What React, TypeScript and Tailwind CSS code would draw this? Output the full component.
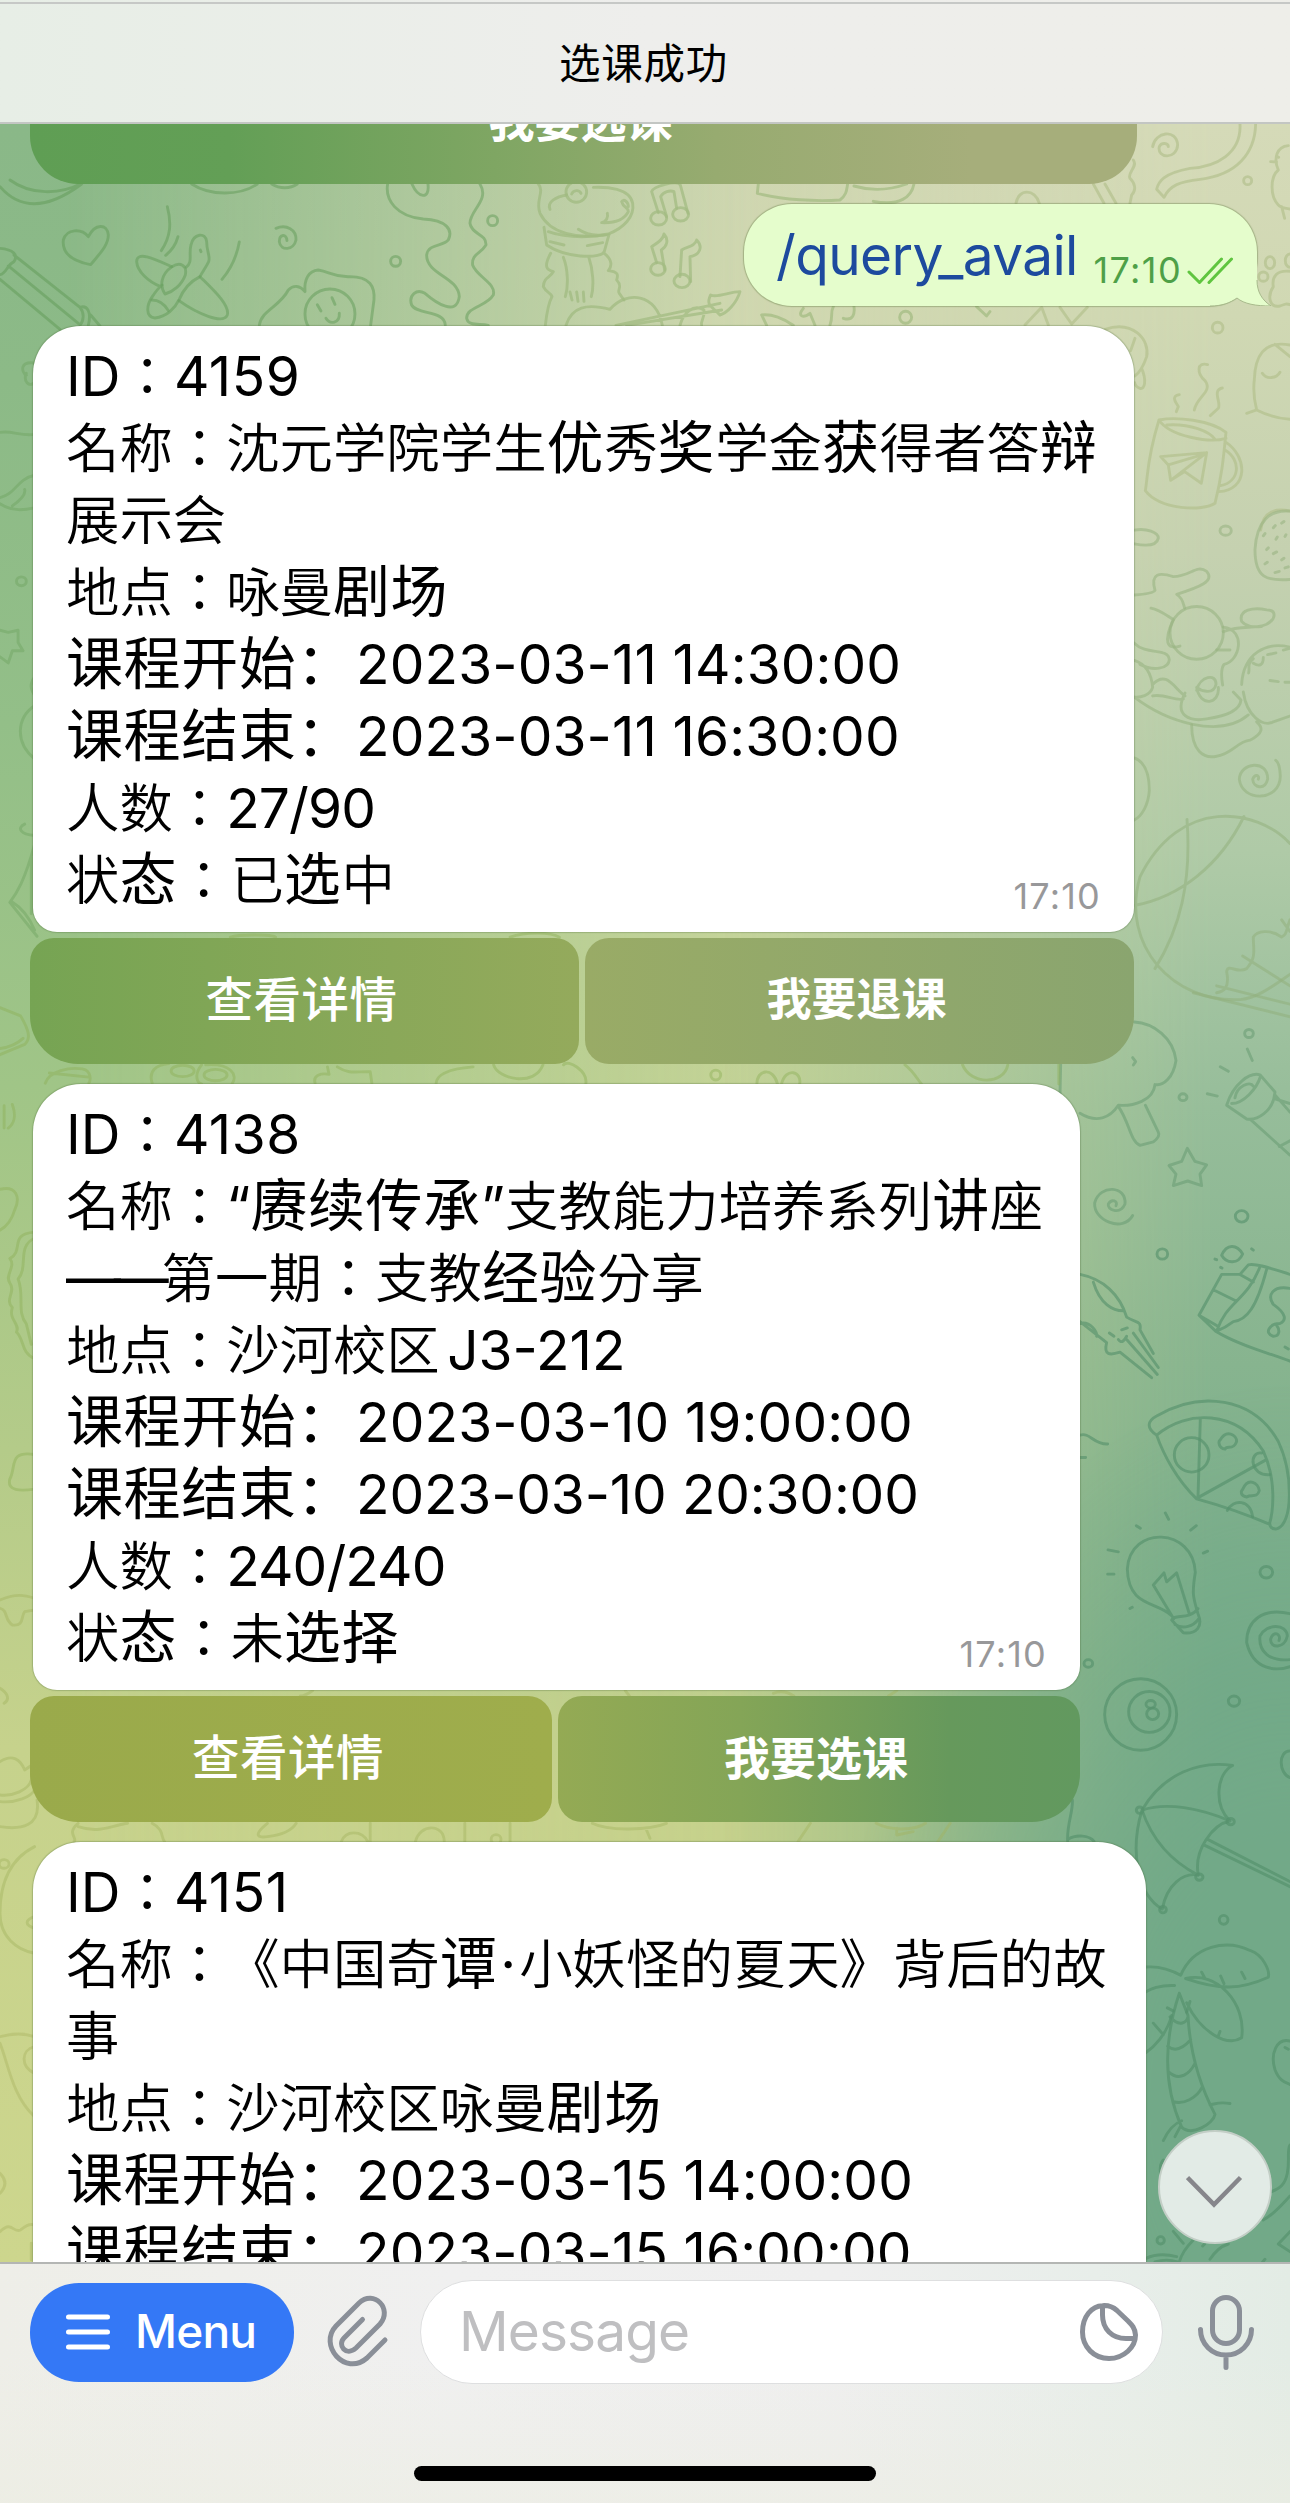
import React from "react";

type Kind = "light" | "heavy" | "latin";
type Seg = { t: string; k: Kind; c?: string };

const L = (t: string, c?: string): Seg => ({ t, k: "light", c });
const H = (t: string, c?: string): Seg => ({ t, k: "heavy", c });
const N = (t: string, c?: string): Seg => ({ t, k: "latin", c });

const kindClass: Record<Kind, string> = {
  light: "font-['Noto_Sans_CJK_TC',sans-serif] text-[53.4px] font-[350] leading-none",
  heavy: "font-['Noto_Sans_CJK_SC',sans-serif] text-[57px] tracking-[0.6px] leading-none",
  latin: "leading-none",
};

function Line({ segs }: { segs: Seg[] }) {
  return (
    <div className="h-[72px] whitespace-nowrap">
      {segs.map((s, i) => (
        <span key={i} className={`${kindClass[s.k]} ${s.c ?? ""}`}>
          {s.t}
        </span>
      ))}
    </div>
  );
}

function Card({ lines, time, width }: { lines: Seg[][]; time?: string; width: string }) {
  return (
    <div
      className={`${width} relative ml-[33px] h-[606px] rounded-t-[48px] rounded-b-[24px] bg-white pl-[33px] pt-[14px] font-['Inter',sans-serif] text-[55px] leading-[72px] text-black shadow-[0_0_1px_1px_rgba(70,100,50,0.28)] [text-spacing-trim:space-all]`}
    >
      {lines.map((l, i) => (
        <Line key={i} segs={l} />
      ))}
      {time && (
        <span className="absolute bottom-[14px] right-[33px] text-[36px] leading-[44px] tracking-[1.2px] text-[#98989a]">
          {time}
        </span>
      )}
    </div>
  );
}

function Key({ text, className, label }: { text: string; className: string; label: string }) {
  return (
    <div className={`flex h-[126px] items-center justify-center font-['Noto_Sans_CJK_SC',sans-serif] text-white ${className}`}>
      <span className={`-mt-[8px] mr-[6px] ${label}`}>{text}</span>
    </div>
  );
}

const date = "ml-[2px] tracking-[0.12px]";

const card1: Seg[][] = [
  [N("ID"), L("："), N("4159", "tracking-[0.5px]")],
  [L("名称：沈元学院学生"), H("优"), L("秀"), H("奖"), L("学金"), H("获"), L("得者答"), H("辩")],
  [L("展示会")],
  [L("地点：咏曼"), H("剧场")],
  [H("课程开始："), N("2023-03-11 14:30:00", date)],
  [H("课程结束："), N("2023-03-11 16:30:00", date)],
  [L("人数："), N("27/90", "tracking-[-0.9px]")],
  [L("状"), H("态"), L("：已"), H("选"), L("中")],
];

const card2: Seg[][] = [
  [N("ID"), L("："), N("4138", "tracking-[0.5px]")],
  [L("名称："), N("“"), H("赓续传承"), N("”"), L("支教能力培养系列"), H("讲"), L("座")],
  [N("——", "tracking-[-7.2px]"), L("第一期：支教"), H("经验"), L("分享")],
  [L("地点：沙河校区"), N(" J3-212", "-ml-[8px]")],
  [H("课程开始："), N("2023-03-10 19:00:00", date)],
  [H("课程结束："), N("2023-03-10 20:30:00", "ml-[2px] tracking-[-0.15px]")],
  [L("人数："), N("240/240", "tracking-[-0.9px]")],
  [L("状"), H("态"), L("：未"), H("选择")],
];

const card3: Seg[][] = [
  [N("ID"), L("："), N("4151", "tracking-[0.5px]")],
  [L("名称：《中国奇"), H("谭"), N("·", "mx-[3px]"), L("小妖怪的夏天》背后的故")],
  [L("事")],
  [L("地点：沙河校区咏曼"), H("剧场")],
  [H("课程开始："), N("2023-03-15 14:00:00", date)],
  [H("课程结束："), N("2023-03-15 16:00:00", date)],
];

function Doodles() {
  return (
    <svg
      className="absolute left-0 top-0 opacity-80 [&_*]:[vector-effect:non-scaling-stroke]"
      width="1290"
      height="2138"
      viewBox="0 124 1290 2138"
      fill="none"
      strokeWidth="2.9"
      strokeLinecap="round"
      strokeLinejoin="round"
    >
      <g transform="translate(0 180) scale(.3333)" stroke="#5f9a55" strokeOpacity=".6">
        <path d="M30 0C90 45 180 45 245 10M0 20C60 90 140 90 245 12" />
        <path d="M575 12C630 48 720 48 772 12M815 12C840 27 870 27 892 12" />
        <path d="M265 170C245 145 200 145 190 180C185 225 225 245 272 254C300 220 325 195 325 165C322 130 285 130 265 170Z" />
        <path d="M0 205C40 208 55 225 42 245C20 255 20 280 0 284M42 225L240 382M25 258L235 430M0 298L180 448M240 382C262 375 275 395 265 436M240 382C255 400 250 425 240 436M272 405L300 438" />
        <path d="M502 80C515 130 512 170 484 212M534 170C528 192 515 212 497 226M718 186C710 230 690 270 666 298" />
        <path d="M515 260C470 240 410 210 410 245C412 275 445 305 482 320M558 262C580 245 565 225 573 195C580 160 618 155 620 185C620 215 632 230 626 245C618 262 608 275 600 290C560 310 545 340 537 360C525 385 500 410 465 414C435 410 440 375 457 350C470 330 480 320 486 315" />
        <path d="M516 260C540 245 562 255 556 285C545 315 520 335 495 342C480 320 480 285 516 260ZM600 290C640 330 690 375 682 405C670 435 590 400 537 362M455 360C480 360 497 378 505 392M601 210L603 215" />
        <path d="M828 145C860 132 890 150 888 180C882 210 842 215 838 185C838 162 860 160 861 182" />
        <path d="M915 335C912 300 925 272 955 270C990 275 1000 292 1050 290C1110 290 1125 320 1122 360L1112 436M915 335C900 315 880 315 865 330C840 380 785 390 778 436" />
        <circle cx="990" cy="402" r="75" /><path d="M952 374L963 393M996 353L1005 373M978 415C990 435 1020 430 1018 400" />
        <path d="M1163 12C1155 60 1190 110 1270 117C1340 120 1360 150 1345 180C1330 200 1285 190 1280 225C1280 285 1375 290 1378 350C1370 410 1310 370 1275 340C1250 325 1225 345 1235 375C1250 405 1335 390 1336 436M1440 12C1470 60 1410 90 1410 130C1415 165 1460 160 1458 195C1440 225 1415 220 1418 255C1430 290 1490 310 1480 345C1460 380 1400 380 1400 415C1405 440 1440 430 1465 436M1236 12C1255 55 1290 60 1284 12" />
        <circle cx="1187" cy="244" r="15" /><circle cx="1478" cy="122" r="15" />
      </g>
      <g transform="translate(500 100) scale(.3333)" stroke="#9ab578" strokeOpacity=".75">
        <path d="M115 252C135 275 105 300 120 340C150 400 230 420 325 402C370 385 405 350 398 310C390 265 320 260 280 262M150 328C140 305 170 290 200 285M305 368C320 365 325 350 322 340M305 368C350 370 375 355 385 335C385 320 370 325 365 305C370 295 385 305 385 320M235 388C260 405 290 410 325 402" />
        <circle cx="229" cy="276" r="31" /><path d="M215 282C220 270 238 268 243 280" />
        <path d="M132 382L140 435C200 475 290 475 312 458L327 404M145 395C200 415 270 412 327 404M150 425L192 435M262 437L308 428M152 460C130 500 140 510 160 515C150 535 132 530 130 560C140 580 150 575 156 590C145 610 140 640 136 676M190 472C205 510 205 560 196 590M266 470C280 510 282 560 274 590M210 576L216 600M230 576L234 604M250 576L252 604M310 458C340 480 335 500 325 512C355 515 355 525 350 540C370 560 350 570 358 580L372 600" />
        <path d="M198 676C215 620 260 610 330 628C380 570 470 580 487 676M348 676L660 610M380 676L665 630M540 676C550 640 580 610 612 630C615 655 600 665 605 676M632 585C650 595 690 575 720 575C710 610 680 640 660 645C640 620 615 620 632 585Z" />
        <path d="M475 338L455 275C460 258 530 240 541 255L564 340M500 350L482 290C490 275 510 270 522 275L530 325" />
        <ellipse cx="476" cy="355" rx="24" ry="20" /><ellipse cx="542" cy="343" rx="24" ry="20" />
        <path d="M470 488L455 440C470 430 490 420 492 402C508 420 500 440 484 450L494 510M540 530L545 450C560 440 585 440 590 420C610 440 600 465 570 470L572 545" />
        <ellipse cx="474" cy="507" rx="22" ry="19" /><ellipse cx="546" cy="543" rx="24" ry="20" />
        <path d="M775 252L772 280C850 300 950 305 1020 300C1040 285 1040 270 1043 252M1062 258C1120 275 1170 270 1220 252M1120 304C1200 320 1235 290 1242 252M785 645C830 640 870 670 880 676M785 645L800 676M910 625C890 650 910 655 930 640L945 676M1000 620C990 640 1000 650 990 676M1030 655C1060 665 1065 640 1062 620M1430 620L1460 648L1470 635" />
        <circle cx="1217" cy="652" r="18" />
      </g>
      <g transform="translate(1010 110) scale(.3333)" stroke="#b2bf8b" strokeOpacity=".8">
        <path d="M428 110C435 65 500 55 503 105C500 150 440 145 448 110C455 95 475 100 475 110M690 42C695 130 620 170 540 175C460 190 445 215 440 238L462 262C480 225 510 215 570 208C680 195 735 130 737 42" />
        <path d="M835 107C800 110 790 145 805 180C780 200 780 260 805 285C815 295 830 295 840 297M782 155L800 156M805 141L806 142M815 290L824 325M18 280C25 235 75 235 88 280M250 222L282 280M285 222L318 280M370 150C385 170 350 190 360 205C375 220 380 240 365 255L360 280" />
        <circle cx="713" cy="212" r="12" /><circle cx="623" cy="653" r="16" /><ellipse cx="780" cy="458" rx="14" ry="18" /><ellipse cx="760" cy="500" rx="14" ry="14" /><ellipse cx="840" cy="452" rx="14" ry="20" />
        <path d="M840 484C800 480 785 500 790 530C770 560 780 595 810 588C825 582 830 580 840 584M45 645L95 592L115 645M150 592L185 642L232 592" />
        <path d="M285 658C370 630 420 690 410 740C400 770 385 790 375 798M375 685L362 722M395 775C410 810 405 840 390 835C380 832 375 825 374 818" />
        <path d="M593 764C560 755 560 790 585 812C610 845 560 860 553 900M637 834C605 840 635 880 625 895L601 917M508 854C480 860 500 880 505 890L499 905" />
        <path d="M447 930C410 1050 415 1090 406 1142C450 1200 580 1205 615 1180C635 1100 640 1050 648 967C600 930 500 920 447 930ZM447 930C480 980 600 1000 648 985M470 945C540 940 600 965 615 988M645 995C715 1040 715 1140 627 1145M645 1020C695 1050 690 1115 632 1127" />
        <path d="M452 1040L590 1028L574 1120L524 1085L482 1111L475 1065ZM475 1065L575 1035M482 1111L590 1028" />
        <path d="M840 705C760 690 735 740 733 810C728 850 735 880 740 900L710 910M740 900C770 915 800 925 840 928M757 790C770 810 800 805 810 787M795 703L840 740M752 1260C760 1200 800 1195 840 1203" />
      </g>
      <g transform="translate(1040 320) scale(.3333 .574)" stroke="#90ae78" strokeOpacity=".6">
        <ellipse cx="557" cy="367" rx="17" ry="8" />
        <path d="M750 333C690 330 650 350 645 400C645 450 680 455 750 452M670 376L675 372M700 362L706 358M725 354L732 351M680 400L685 397M708 382L712 378M735 377L738 374M675 425L682 422M700 407L710 404M725 418L732 415M705 440L718 438M735 432L745 430" />
        <path d="M283 366C320 362 355 370 355 380C350 395 310 393 283 390M283 479C310 478 340 476 345 471C330 440 360 440 400 447C450 447 470 425 500 438C525 455 480 465 410 478C430 485 430 495 434 502M333 502C360 505 380 515 400 522M400 522C370 560 380 575 420 568" />
        <ellipse cx="470" cy="545" rx="80" ry="46" />
        <path d="M550 535C620 540 600 595 552 600C540 610 545 625 548 636M530 575L570 575M550 543C610 530 640 540 680 530C710 520 710 505 680 505C640 500 595 505 605 525C620 535 640 535 665 534M283 563C320 585 385 570 388 592C385 608 340 612 300 600M283 593C320 600 335 620 338 640C330 655 300 658 283 657M338 635C380 610 400 640 435 655M338 655C370 650 410 665 430 660M283 657C380 700 540 730 625 688M435 650C400 690 450 700 500 695C560 690 600 680 603 662L580 648" />
        <path d="M470 645C480 620 530 615 528 635C520 655 480 645 470 640C480 675 540 670 535 640M455 705C455 750 490 765 530 760C580 755 590 735 630 732C670 720 670 710 650 700M750 570C680 560 610 580 605 635M610 648C620 690 670 710 700 700L750 690M640 590C620 600 630 605 626 615M640 598C660 605 670 600 670 588M683 583L708 580M690 628L715 630M730 575L750 572M735 631L750 631" />
        <path d="M598 800C600 770 685 765 683 800C675 820 640 815 638 800C645 790 660 793 655 800M598 800C605 840 720 840 721 795C720 780 715 770 707 767M283 763C315 770 328 790 328 820C325 845 305 865 283 871" />
        <path d="M750 912C650 850 420 830 300 970C240 1090 400 1190 600 1184C650 1182 700 1160 750 1140M441 870C455 980 420 1060 345 1130M283 1020C420 1005 540 950 612 865" />
        <path d="M460 1172L750 1214M530 1160L750 1192M608 1108L750 1160M725 1045L750 1065M750 1045C735 1070 740 1070 725 1075C690 1060 650 1065 640 1075C640 1100 650 1110 620 1130C590 1140 565 1120 560 1135C570 1165 550 1170 530 1172" />
      </g>
      <g transform="translate(1040 320) scale(.3333 .574)" stroke="#659a70" strokeOpacity=".65">
        <path d="M283 1223C340 1225 400 1250 408 1290C400 1320 370 1335 345 1332C340 1360 280 1370 235 1368C210 1390 170 1400 120 1382M235 1370C270 1400 270 1430 300 1438L340 1432C355 1425 360 1420 355 1415L316 1368M278 1285L287 1292L280 1298M62 1296L60 1350" />
        <ellipse cx="627" cy="1243" rx="13" ry="7" /><ellipse cx="429" cy="1354" rx="12" ry="6" />
        <path d="M622 1270L637 1290M541 1301L565 1309M502 1348L532 1352M560 1368C580 1330 630 1310 660 1315L705 1345C700 1380 650 1395 620 1392ZM575 1365C610 1365 650 1340 662 1317M585 1355C590 1335 630 1325 640 1335M632 1393L750 1455M705 1357L750 1365M705 1350L750 1380M718 1440L750 1430" />
        <path d="M442 1443L465 1466L500 1472L480 1488L485 1508L443 1500L400 1508L408 1488L387 1473L425 1466ZM278 1560C250 1590 160 1570 164 1538C180 1505 260 1508 255 1540C240 1560 200 1550 205 1540C215 1530 235 1535 228 1543" />
      </g>
      <g transform="translate(1040 1180) scale(.3333 .6378)" stroke="#4f8c67" strokeOpacity=".7">
        <ellipse cx="605" cy="57" rx="19" ry="9" /><ellipse cx="367" cy="116" rx="16" ry="8" />
        <path d="M120 148C190 155 240 180 260 215C290 225 305 220 300 235L340 272M160 160C180 195 220 205 250 205M120 222L200 255C190 275 210 275 240 270L335 310M120 225C150 220 175 240 170 245M280 240L355 294M260 250L352 305M208 240L222 245M245 235L262 232M235 250C245 258 255 250 260 245" />
        <path d="M545 118C560 100 590 100 608 116C595 132 560 132 545 118ZM525 124L530 125M542 137L546 138M635 108L640 110M750 148C700 140 650 130 625 133L600 148L545 148L477 212L527 237C600 260 680 270 750 284M477 212L530 228M520 172L590 190M600 148L640 160M660 136C620 190 560 190 530 237M680 140C650 200 620 220 580 222C560 230 540 235 530 237M750 170C700 165 680 180 700 195C740 210 740 220 720 225C690 225 670 240 700 245C720 245 720 235 710 228M735 262L745 265" />
        <path d="M350 400C320 390 320 378 350 370C480 330 640 340 715 410C760 460 760 540 710 547C690 548 690 540 690 540C600 520 540 510 470 500C410 470 370 430 350 400ZM350 400C440 360 590 360 670 425C710 470 700 520 688 540M481 375L474 498L674 440" />
        <ellipse cx="455" cy="431" rx="52" ry="27" /><path d="M562 518C580 500 630 500 638 528M665 428C625 425 630 465 690 462M540 408C560 390 590 400 590 410C580 425 560 415 555 422C535 420 535 410 540 408ZM608 485C625 465 655 475 658 487C650 500 635 492 620 497C600 495 602 488 608 485Z" />
        <path d="M120 400C150 395 160 415 203 414M120 435L137 435M395 683C350 660 265 670 262 610C270 540 460 545 466 615C455 650 460 655 474 680C490 700 470 712 430 710L395 690C400 680 450 690 474 672M405 697C430 705 460 700 476 688M401 688L340 635L372 616L380 630L410 616L448 680M376 522L386 532M289 542L301 546M469 542L452 549M503 582L490 585M204 580L235 583M203 618L222 618M270 672L277 670" />
        <ellipse cx="679" cy="615" rx="19" ry="9" /><ellipse cx="582" cy="817" rx="17" ry="8" /><ellipse cx="145" cy="758" rx="13" ry="6" /><ellipse cx="551" cy="1160" rx="13" ry="7" />
        <path d="M750 680C670 670 620 690 620 725C640 770 710 770 750 763M750 752C690 755 655 740 660 715C680 695 740 695 742 715C735 735 690 735 692 720C700 705 725 712 717 722M750 895C715 895 715 930 750 937" />
        <ellipse cx="302" cy="838" rx="108" ry="56" /><ellipse cx="328" cy="834" rx="62" ry="32" /><ellipse cx="332" cy="822" rx="14" ry="6" /><ellipse cx="338" cy="837" rx="18" ry="9" />
        <path d="M306 988C370 930 480 910 578 918C530 930 520 980 570 1005C520 1010 460 1050 475 1090C430 1085 380 1105 367 1143C290 1120 270 1050 306 988ZM306 988C380 975 480 985 570 1005M306 988C340 1040 400 1070 475 1090M500 1033L750 1100M490 1042L750 1108" />
        <ellipse cx="299" cy="988" rx="10" ry="5" /><ellipse cx="572" cy="1006" rx="11" ry="5" /><ellipse cx="478" cy="1093" rx="11" ry="5" /><ellipse cx="369" cy="1144" rx="10" ry="5" />
        <path d="M318 1234C360 1232 400 1240 422 1247C460 1200 560 1190 630 1208C670 1215 690 1240 685 1250C600 1270 540 1270 437 1252M437 1252C530 1240 620 1290 605 1345C560 1360 480 1335 440 1290M404 1263C360 1262 330 1268 318 1273M395 1310C380 1340 340 1360 318 1368M485 1242L495 1252M542 1248L552 1260M605 1242L615 1252M540 1335L535 1342M340 1322L370 1340M382 1298L400 1303M450 1288L440 1305" />
        <path d="M418 1275C370 1350 370 1420 425 1485C455 1500 520 1480 525 1465C480 1420 450 1370 444 1310ZM390 1312C420 1330 440 1320 444 1312M383 1358C410 1370 440 1355 452 1348M385 1398C420 1415 450 1400 465 1385M400 1445C430 1450 470 1440 487 1422M570 1448C540 1445 530 1448 510 1450M425 1475C400 1480 380 1495 370 1506M420 1485L405 1500M750 1350C710 1345 690 1370 705 1395C720 1415 740 1415 750 1418M735 1360L745 1363M97 972C100 990 80 1010 83 1037M83 1034C110 1025 150 1028 162 1037" />
      </g>
      <g transform="translate(1040 2110) scale(.3333)" stroke="#4f8c67" strokeOpacity=".7">
        <path d="M400 364L430 400M460 390C440 410 425 430 418 456M318 445C350 430 390 435 410 440M345 456C370 448 395 450 412 456M510 448C525 425 545 408 565 402M488 408L494 402M750 105C740 120 750 150 742 190C735 225 720 235 695 245M670 330C700 315 725 285 750 258M750 365L715 402L750 425M675 448L668 456M370 150C358 165 360 180 362 190" />
        <circle cx="362" cy="391" r="11" />
      </g>
      <g transform="translate(0 310) scale(.8227 .408)" stroke="#6da35e" strokeOpacity=".55">
        <path d="M42 130C25 125 25 150 32 160M32 155C28 175 35 190 42 178M0 300C15 295 25 310 42 305M42 405C20 415 20 450 0 460M0 475C15 495 30 490 42 485M30 440C32 455 22 470 15 480M0 785L10 790L22 785V815L28 835L15 835L10 865L0 850M42 970C20 1000 18 1060 42 1100M42 900C35 920 38 930 42 945M30 1260C20 1270 25 1285 42 1288M42 1310C30 1400 20 1430 12 1452L45 1535M14 1450C30 1470 38 1500 42 1520M38 1340V1480" />
        <ellipse cx="26" cy="665" rx="6" ry="11" />
      </g>
      <g transform="translate(0 920) scale(.8227 .408)" stroke="#8caf55" strokeOpacity=".55">
        <path d="M0 215L25 235C35 270 38 290 30 305L0 330M0 315C10 312 20 305 28 290M5 455V510M15 452C20 480 17 500 10 510M0 660C20 650 25 680 18 710C15 730 10 750 0 760M42 765C10 770 30 810 12 830C20 850 5 870 12 890C20 910 5 930 15 950C10 980 25 990 20 1010C30 1030 25 1060 42 1075M42 780C20 800 35 850 22 880C30 920 20 960 32 990L38 1040M42 1310C10 1300 20 1340 12 1370C8 1400 25 1400 42 1395M55 400C60 370 85 360 100 365C112 370 110 395 108 400M60 375L108 385M185 400C180 370 190 355 205 352M245 355C235 380 240 400 245 402M250 355C280 350 290 380 282 402M383 400C380 380 390 375 400 378L398 360M410 360C425 380 435 370 450 372L452 400M530 402C530 380 545 365 575 360M600 355C605 390 650 410 660 355M685 355C690 340 715 370 712 402M920 402C920 365 940 360 945 402M950 402C955 360 975 370 972 402M1100 355C1110 370 1115 390 1120 402M1170 355C1180 405 1220 405 1225 355M1287 352V402M280 42C290 35 330 35 335 42M620 42C640 28 670 30 680 42" />
        <circle cx="222" cy="370" r="14" /><circle cx="262" cy="380" r="14" /><ellipse cx="870" cy="380" rx="6" ry="12" />
      </g>
      <g transform="translate(0 1540) scale(.8227 .3333)" stroke="#a3b35f" strokeOpacity=".55">
        <path d="M0 180C20 160 30 165 42 175M0 205C10 210 5 240 15 255C30 260 25 230 30 215L42 210M0 445C10 460 12 480 5 490M0 665C15 640 25 660 30 690L42 670M0 765C15 770 35 750 38 720M0 785C20 790 38 770 42 750M0 860C25 870 50 860 45 780M42 920C10 960 0 1040 0 1120C0 1190 20 1230 42 1240M42 1130C30 1140 30 1155 42 1165M95 850C80 880 95 895 90 905M95 860C120 880 130 860 155 850M185 850C200 870 195 890 200 905M325 850C310 880 310 895 325 890C345 885 355 870 360 850M415 905C420 870 440 870 447 905M450 850V905M505 905C510 850 540 850 540 905M565 850V905M620 850V905M720 850C740 875 790 870 810 850M785 865L790 895M970 905L985 850M1065 850C1080 870 1110 875 1125 850M1090 865V885L1110 875M1140 905L1155 850M380 452C370 470 365 468 365 468M760 452L765 468M940 460C950 450 960 460 965 468M1090 452L1080 468" />
        <ellipse cx="5" cy="972" rx="6" ry="13" /><ellipse cx="603" cy="898" rx="6" ry="14" />
      </g>
      <g transform="translate(0 2030) scale(.8227 .3333)" stroke="#aeb865" strokeOpacity=".6">
        <path d="M0 20C15 10 30 10 42 20M0 40C10 100 15 200 42 260M42 50C25 60 25 110 42 130M0 430C8 450 8 470 0 490M0 605C15 570 15 610 25 600C30 590 35 580 42 585M38 640V690" />
      </g>
    </svg>
  );
}

export default function App() {
  return (
    <div className="flex h-[2503px] w-[1290px] flex-col overflow-hidden font-['Inter',sans-serif]">
      <header className="relative flex h-[124px] items-center justify-center border-b-2 border-[#c3c6c3] bg-gradient-to-r from-[#e7eee6] via-[#eeeeec] to-[#eeeee9]">
        <div className="absolute inset-x-0 top-[2px] h-[2px] bg-[#c6c8c6]" />
        <h1 className="-mt-px mr-[3px] font-['Noto_Sans_CJK_SC',sans-serif] text-[41.5px] font-normal leading-[60px] tracking-[0.7px] text-black">
          选课成功
        </h1>
      </header>

      <main className="relative h-[2138px] overflow-hidden">
        <div className="absolute inset-0 bg-[linear-gradient(180deg,#8ab888_0%,#8cba87_12%,#93bf88_28%,#a0c587_45%,#b4cb89_62%,#c6d28c_76%,#cdd68d_100%)]" />
        <div className="absolute inset-0 bg-[linear-gradient(180deg,#cfd6b1_0%,#d1d9ae_18%,#c4d398_40%,#c3d294_50%,#b4cb90_65%,#c6d18c_79%,#c0cf8c_100%)] [mask-image:linear-gradient(90deg,transparent_5%,black_58%)]" />
        <div className="absolute inset-0 bg-[linear-gradient(180deg,#d5dab8_0%,#d0d8b3_9%,#c5d1b0_20%,#afcaa7_34%,#96bd9a_46%,#87b48f_58%,#74ab89_74%,#6fa786_100%)] [mask-image:linear-gradient(90deg,transparent_56%,black_94%)]" />
        <div className="absolute inset-0 bg-[#72a988] [mask-image:radial-gradient(460px_720px_at_1290px_1980px,black_30%,transparent_100%)]" />
        <Doodles />

        <div className="relative">
          <Key
            text="我要选课"
            label="text-[46px] font-bold"
            className="-mt-[66px] ml-[30px] w-[1107px] rounded-b-[48px] bg-[linear-gradient(90deg,#5f9e54_0%,#639f56_18%,#7fa663_42%,#97ab70_62%,#a6ae7b_85%)]"
          />

          <div className="relative ml-[744px] mt-[20px] h-[102px] w-[513px] rounded-[48px] bg-[#e5fdcc] shadow-[0_0_1px_1px_rgba(80,110,50,0.35)]">
            <svg className="absolute bottom-0 right-[-15px]" width="62" height="48" viewBox="0 0 62 48">
              <path d="M0 0H47V22C47 34 52 42 61 48C46 48 34 46 27 40C18 46 8 48 0 48Z" fill="#e5fdcc" />
              <path d="M47 22C47 34 52 42 61 48C46 48 34 46 27 40C20 45 12 48 0 48" fill="none" stroke="#a8ba8c" strokeWidth="1" />
            </svg>
            <div className="relative flex h-full items-center justify-between pl-[32px] pr-[24px]">
              <span className="text-[55px] leading-[72px] tracking-[-0.65px] text-[#1d4a9e]">/query_avail</span>
              <span className="flex items-center">
                <span className="mt-[29px] text-[36px] leading-[44px] tracking-[1.4px] text-[#4ea047]">17:10</span>
                <svg className="ml-[5px] mt-[31px]" width="46" height="28" viewBox="0 0 46 28" fill="none" stroke="#5fc53f" strokeWidth="3" strokeLinecap="round" strokeLinejoin="round">
                  <path d="M2 15L12.500 25.500L34.500 2M22 25.500L44.500 2" />
                </svg>
              </span>
            </div>
          </div>

          <div className="mt-[20px]">
            <Card width="w-[1101px]" lines={card1} time="17:10" />
          </div>
          <div className="ml-[30px] mt-[6px] flex gap-[6px]">
            <Key
              text="查看详情"
              label="text-[47.5px] font-medium tracking-[0.5px]"
              className="w-[549px] rounded-[24px] rounded-bl-[48px] bg-gradient-to-r from-[#76a453] to-[#94aa5c]"
            />
            <Key
              text="我要退课"
              label="text-[45px] font-bold"
              className="w-[549px] rounded-[24px] rounded-br-[48px] bg-gradient-to-r from-[#99ab66] to-[#8aa56f]"
            />
          </div>

          <div className="mt-[20px]">
            <Card width="w-[1047px]" lines={card2} time="17:10" />
          </div>
          <div className="ml-[30px] mt-[6px] flex gap-[6px]">
            <Key
              text="查看详情"
              label="text-[47.5px] font-medium tracking-[0.5px]"
              className="w-[522px] rounded-[24px] rounded-bl-[48px] bg-gradient-to-r from-[#9aaa4b] to-[#9fad4c]"
            />
            <Key
              text="我要选课"
              label="text-[46px] font-bold"
              className="w-[522px] rounded-[24px] rounded-br-[48px] bg-[linear-gradient(90deg,#94aa54_0%,#84a557_35%,#66995c_75%,#62995f_100%)]"
            />
          </div>

          <div className="mt-[20px]">
            <Card width="w-[1113px]" lines={card3} />
          </div>
        </div>

        <button className="absolute bottom-[18px] right-[18px] flex h-[114px] w-[114px] items-center justify-center rounded-full border-2 border-[#c3cec6] bg-[#e2ebe6]">
          <svg className="mt-[10px]" width="58" height="34" viewBox="0 0 58 34" fill="none" stroke="#86868b" strokeWidth="4.500">
            <path d="M1.500 2.500L28 29.500L54.500 2.500" />
          </svg>
        </button>
      </main>

      <footer className="relative h-[241px] border-t-2 border-[#b4b6b4] bg-[linear-gradient(90deg,#eeeee8_0%,#f0f0f0_35%,#efefef_65%,#e8eeea_85%,#e3ece5_100%)]">
        <div className="absolute inset-0 bg-gradient-to-b from-transparent from-40% to-[#ecede2]/60" />
        <div className="relative flex items-center pl-[30px] pt-[16px]">
          <button className="flex h-[99px] w-[264px] items-center rounded-[49px] bg-[#3478f6] pl-[36px] text-white">
            <svg width="44" height="36" viewBox="0 0 44 36" stroke="white" strokeWidth="5" strokeLinecap="round">
              <path d="M2.500 3H41.500M2.500 18H41.500M2.500 33H41.500" />
            </svg>
            <span className="-mt-[3px] ml-[25px] text-[46px] font-medium leading-none tracking-[-0.8px]">Menu</span>
          </button>
          <svg className="ml-[31px]" width="64" height="74" viewBox="0 0 64 74" fill="none" stroke="#8a8f98" strokeWidth="5" strokeLinecap="round">
            <path d="M37.500 24.500L19 43C12 50 21 62 31 53L55 29C68 14 49 -6 34 8L11 31C-7 50 20 82 42 63L60 45" />
          </svg>
          <div className="ml-[31px] flex h-[104px] w-[743px] items-center rounded-[52px] border border-[#dedfe0] bg-white pl-[38px]">
            <span className="-mt-px w-[621px] text-[55px] leading-none tracking-[-0.9px] text-[#bfbfc1]">Message</span>
            <svg width="58" height="58" viewBox="0 0 58 58" fill="none" stroke="#8a8f98" strokeWidth="5">
              <path d="M22.500 2.700C12 3 2.500 13 2.500 29C2.500 44 14 55.500 29 55.500C44 55.500 55.500 44 55.500 32C55 25 52 22 48 18L37 7.500C33 4 28 2.200 22.500 2.700ZM22.500 3V12C22.500 26 32 35.500 46 35.500H55" />
            </svg>
          </div>
          <svg className="ml-[34px]" width="58" height="76" viewBox="0 0 58 76" fill="none" stroke="#8a8f98" strokeWidth="5" strokeLinecap="round">
            <rect x="15.500" y="3.500" width="27" height="46" rx="13.500" />
            <path d="M3.500 35.500C3.500 50 15 61 29 61C43 61 54.500 50 54.500 35.500M29 61V73.500" />
          </svg>
        </div>
        <div className="absolute bottom-[22px] left-[414px] h-[15px] w-[462px] rounded-full bg-black" />
      </footer>
    </div>
  );
}
